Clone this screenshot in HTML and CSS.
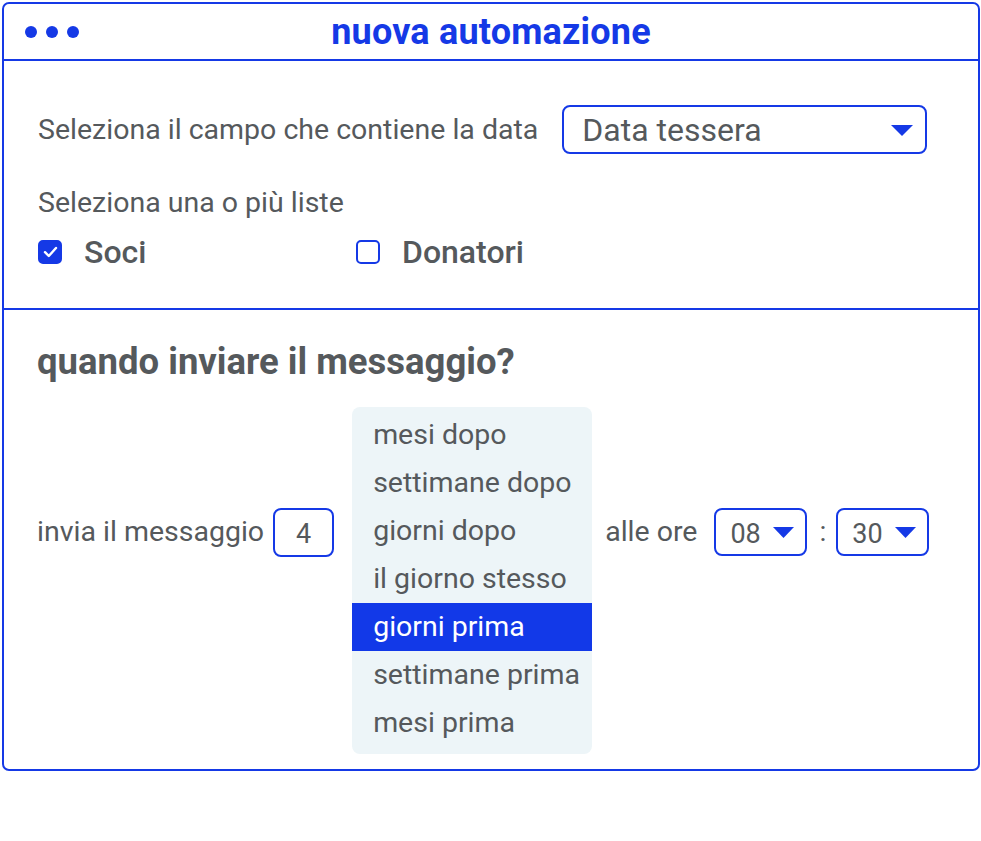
FILE: index.html
```html
<!DOCTYPE html>
<html lang="it">
<head>
<meta charset="utf-8">
<title>nuova automazione</title>
<link rel="stylesheet" href="styles.css">
</head>
<body>
<div class="window">
  <header class="titlebar">
    <div class="dots"><span></span><span></span><span></span></div>
    <h1 class="title">nuova automazione</h1>
  </header>
  <section class="panel panel-top">
    <div class="field-row">
      <span class="label">Seleziona il campo che contiene la data</span>
      <div class="select select-wide">
        <span>Data tessera</span>
        <svg class="caret" width="22" height="11" viewBox="0 0 22 11"><path d="M0 0H22L11 11Z"/></svg>
      </div>
    </div>
    <div class="label lists-label">Seleziona una o più liste</div>
    <div class="checks">
      <label class="check">
        <span class="box checked"><svg width="15" height="12" viewBox="0 0 15 12"><path d="M2 6.2L5.8 10L13 2" fill="none" stroke="#fff" stroke-width="2.4" stroke-linecap="round" stroke-linejoin="round"/></svg></span>
        <span class="check-text">Soci</span>
      </label>
      <label class="check">
        <span class="box"></span>
        <span class="check-text">Donatori</span>
      </label>
    </div>
  </section>
  <section class="panel panel-bottom">
    <h2 class="question">quando inviare il messaggio?</h2>
    <div class="send-row">
      <div class="inline-group">
        <span class="label">invia il messaggio</span>
        <div class="num-input">4</div>
      </div>
      <ul class="options">
        <li>mesi dopo</li>
        <li>settimane dopo</li>
        <li>giorni dopo</li>
        <li>il giorno stesso</li>
        <li class="active">giorni prima</li>
        <li>settimane prima</li>
        <li>mesi prima</li>
      </ul>
      <div class="inline-group time-group">
        <span class="label">alle ore</span>
        <div class="select select-small">
          <span>08</span>
          <svg class="caret" width="21" height="11" viewBox="0 0 21 11"><path d="M0 0H21L10.5 11Z"/></svg>
        </div>
        <span class="label colon">:</span>
        <div class="select select-small">
          <span>30</span>
          <svg class="caret" width="21" height="11" viewBox="0 0 21 11"><path d="M0 0H21L10.5 11Z"/></svg>
        </div>
      </div>
    </div>
  </section>
</div>
</body>
</html>
```

FILE: styles.css
```css
* { box-sizing: border-box; }
html, body { margin: 0; padding: 0; background: #fff; }
body {
  font-family: Roboto, "Liberation Sans", sans-serif;
  color: #55595c;
  padding: 2px 0 0 2px;
}
.window {
  width: 978px;
  height: 769px;
  border: 2px solid #1539e6;
  border-radius: 7px;
}
.titlebar {
  height: 57px;
  border-bottom: 2px solid #1539e6;
  display: flex;
  align-items: center;
  position: relative;
  padding-left: 21px;
}
.dots { display: flex; gap: 9px; }
.dots span {
  width: 12px; height: 12px; border-radius: 50%;
  background: #1539e6;
}
.title {
  position: absolute;
  left: 0; right: 0; top: 0;
  margin: 0;
  text-align: center;
  line-height: 56px;
  font-size: 36px;
  font-weight: 700;
  color: #1539e6;
  letter-spacing: 0.2px;
  pointer-events: none;
}
.panel-top {
  height: 249px;
  border-bottom: 2px solid #1539e6;
  padding: 44px 0 0 34px;
}
.field-row { display: flex; align-items: center; gap: 24px; }
.label { font-size: 28.5px; line-height: 32px; white-space: nowrap; }
.select {
  border: 2px solid #1539e6;
  border-radius: 8px;
  display: flex;
  align-items: center;
  justify-content: space-between;
}
.select-wide {
  width: 365px; height: 49px;
  padding: 0 12px 0 18px;
  font-size: 32px;
}
.caret { fill: #1539e6; flex: none; }
.select-wide .caret { margin-top: 2px; }
.lists-label { margin-top: 33px; }
.checks { display: flex; margin-top: 14px; }
.check { display: flex; align-items: center; width: 318px; }
.box {
  width: 24px; height: 24px;
  border: 2px solid #1539e6;
  border-radius: 5px;
  display: flex; align-items: center; justify-content: center;
}
.box.checked { background: #1539e6; }
.check-text {
  font-size: 32px;
  font-weight: 500;
  margin-left: 22px;
  line-height: 38px;
}
.panel-bottom { padding: 31px 0 0 33px; }
.question {
  margin: 0;
  font-size: 36.5px;
  font-weight: 700;
  line-height: 42px;
  color: #55595c;
}
.send-row {
  display: flex;
  align-items: flex-start;
  margin-top: 24px;
}
.inline-group {
  display: flex;
  align-items: center;
  height: 48px;
  margin-top: 101px;
}
.num-input {
  width: 61px; height: 49px;
  border: 2px solid #1539e6;
  border-radius: 8px;
  margin-left: 9px;
  display: flex; align-items: center; justify-content: center;
  font-size: 27px;
  padding-top: 4px;
}
.options {
  list-style: none;
  margin: 0 0 0 18px;
  padding: 4px 0 7px;
  width: 240px;
  background: #edf5f8;
  border-radius: 8px;
}
.options li {
  height: 48px;
  line-height: 48px;
  padding-left: 21px;
  font-size: 28.5px;
  white-space: nowrap;
}
.options li.active { background: #1239e8; color: #fff; }
.time-group { margin-left: 13px; }
.select-small {
  width: 93px; height: 48px;
  padding: 0 11px 0 14px;
  font-size: 27px;
  margin-left: 17px;
}
.select-small span { padding-top: 4px; }
.colon { margin-left: 12px; }
.colon + .select-small { margin-left: 10px; }
```
